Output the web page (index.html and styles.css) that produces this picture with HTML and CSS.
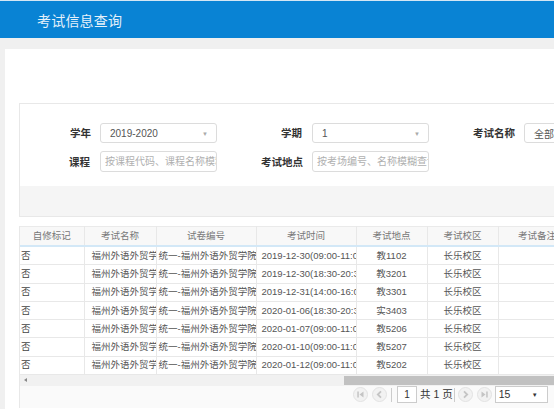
FILE: index.html
```html
<!DOCTYPE html>
<html lang="zh-CN">
<head>
    <meta charset="UTF-8">
    <title>考试信息查询</title>
    <link rel="stylesheet" href="styles.css">
</head>
<body>
    <div class="topbar"><span class="title">考试信息查询</span></div>

    <div class="main">
        <div class="panel">
            <div class="query-box">
                <div class="query-grid">
                    <label>学年</label>
                    <div class="select">2019-2020<span class="caret">▼</span></div>
                    <label>学期</label>
                    <div class="select">1<span class="caret">▼</span></div>
                    <label>考试名称</label>
                    <div class="select">全部<span class="caret">▼</span></div>

                    <label>课程</label>
                    <input type="text" placeholder="按课程代码、课程名称模糊查询">
                    <label>考试地点</label>
                    <input type="text" placeholder="按考场编号、名称模糊查询">
                </div>
                <div class="btn-bar"></div>
            </div>

            <div class="grid-wrap">
                <table class="grid">
                    <colgroup>
                        <col style="width:64px"><col style="width:72px"><col style="width:100px"><col style="width:100px">
                        <col style="width:71px"><col style="width:71px"><col style="width:78px"><col style="width:90px">
                    </colgroup>
                    <thead>
                        <tr><th>自修标记</th><th>考试名称</th><th>试卷编号</th><th>考试时间</th><th>考试地点</th><th>考试校区</th><th>考试备注</th><th></th></tr>
                    </thead>
                    <tbody>
                        <tr><td class="flag">否</td><td class="name">福州外语外贸学院</td><td class="paper">统一-福州外语外贸学院</td><td class="time">2019-12-30(09:00-11:00)</td><td class="c">教1102</td><td class="c">长乐校区</td><td></td><td></td></tr>
                        <tr><td class="flag">否</td><td class="name">福州外语外贸学院</td><td class="paper">统一-福州外语外贸学院</td><td class="time">2019-12-30(18:30-20:30)</td><td class="c">教3201</td><td class="c">长乐校区</td><td></td><td></td></tr>
                        <tr><td class="flag">否</td><td class="name">福州外语外贸学院</td><td class="paper">统一-福州外语外贸学院</td><td class="time">2019-12-31(14:00-16:00)</td><td class="c">教3301</td><td class="c">长乐校区</td><td></td><td></td></tr>
                        <tr><td class="flag">否</td><td class="name">福州外语外贸学院</td><td class="paper">统一-福州外语外贸学院</td><td class="time">2020-01-06(18:30-20:30)</td><td class="c">实3403</td><td class="c">长乐校区</td><td></td><td></td></tr>
                        <tr><td class="flag">否</td><td class="name">福州外语外贸学院</td><td class="paper">统一-福州外语外贸学院</td><td class="time">2020-01-07(09:00-11:00)</td><td class="c">教5206</td><td class="c">长乐校区</td><td></td><td></td></tr>
                        <tr><td class="flag">否</td><td class="name">福州外语外贸学院</td><td class="paper">统一-福州外语外贸学院</td><td class="time">2020-01-10(09:00-11:00)</td><td class="c">教5207</td><td class="c">长乐校区</td><td></td><td></td></tr>
                        <tr><td class="flag">否</td><td class="name">福州外语外贸学院</td><td class="paper">统一-福州外语外贸学院</td><td class="time">2020-01-12(09:00-11:00)</td><td class="c">教5202</td><td class="c">长乐校区</td><td></td><td></td></tr>
                    </tbody>
                </table>

                <div class="hscroll">
                    <span class="arrow"></span>
                    <div class="thumb"></div>
                </div>

                <div class="pager">
                    <svg class="pg-btn" width="15" height="15" viewBox="0 0 15 15"><circle cx="7.5" cy="7.5" r="7" fill="#f2f2f2" stroke="#e2e2e2"/><rect x="4.3" y="4.5" width="1.5" height="6" fill="#c4c4c4"/><path d="M10.5 4.5 L6.5 7.5 L10.5 10.5 Z" fill="#c4c4c4"/></svg>
                    <svg class="pg-btn" width="15" height="15" viewBox="0 0 15 15"><circle cx="7.5" cy="7.5" r="7" fill="#f2f2f2" stroke="#e2e2e2"/><path d="M9 4.3 L5.8 7.5 L9 10.7" fill="none" stroke="#c4c4c4" stroke-width="1.8"/></svg>
                    <span class="sep"></span>
                    <span class="page-input">1</span>
                    <span class="page-text">共 1 页</span>
                    <span class="sep sep-r"></span>
                    <svg class="pg-btn" width="15" height="15" viewBox="0 0 15 15"><circle cx="7.5" cy="7.5" r="7" fill="#f2f2f2" stroke="#e2e2e2"/><path d="M6 4.3 L9.2 7.5 L6 10.7" fill="none" stroke="#c4c4c4" stroke-width="1.8"/></svg>
                    <svg class="pg-btn" width="15" height="15" viewBox="0 0 15 15"><circle cx="7.5" cy="7.5" r="7" fill="#f2f2f2" stroke="#e2e2e2"/><path d="M4.5 4.5 L8.5 7.5 L4.5 10.5 Z" fill="#c4c4c4"/><rect x="9.2" y="4.5" width="1.5" height="6" fill="#c4c4c4"/></svg>
                    <div class="page-size">15<span class="caret dark">▼</span></div>
                </div>
            </div>
        </div>
    </div>
</body>
</html>
```

FILE: styles.css
```css
body { margin: 0; background: #f0f0f0; font-family: "Liberation Sans", "Noto Sans CJK SC", sans-serif; overflow: hidden; width: 554px; height: 409px; }

.topbar { height: 37px; background: #0983d4; border-top: 1px solid #d4e6f4; display: flex; align-items: center; }
.title { margin-left: 37px; font-size: 14px; color: #e6f1fa; letter-spacing: 0.2px; }

.main { padding: 11px 0 0 5px; }
.panel { background: #fff; width: 800px; height: 400px; padding: 54px 0 0 14px; box-sizing: border-box; }

.query-box { border: 1px solid #e8e8e8; border-right: none; padding-top: 19px; }
.query-grid { display: grid; grid-template-columns: 80px 117px 95px 117px 95px 117px; grid-template-rows: 20px 21px; row-gap: 8px; align-items: center; }
.query-grid label { text-align: right; font-size: 10.5px; font-weight: bold; color: #333; line-height: 14px; }
.query-grid label:nth-of-type(odd) { padding-right: 9px; }
.query-grid label:nth-of-type(even) { padding-right: 10px; }
.select, .query-grid input { height: 100%; box-sizing: border-box; border: 1px solid #dcdcdc; border-radius: 3px; background: #fff; }
.select { position: relative; display: flex; align-items: center; padding-left: 9px; font-size: 10px; color: #555; }
.caret { position: absolute; right: 8px; top: 7px; font-size: 6px; line-height: 1; color: #aaa; }
.caret.dark { color: #333; right: 9px; top: 5px; }
.query-grid input { padding: 0 0 0 4px; font-family: inherit; font-size: 10px; color: #555; outline: none; }
.query-grid input::placeholder { color: #b0b0b0; }

.btn-bar { height: 30px; margin-top: 14px; background: #f5f5f5; }

.grid-wrap { margin-top: 9px; border-left: 1px solid #e8e8e8; }
.grid { border-collapse: collapse; table-layout: fixed; width: 646px; font-size: 9.5px; }
.grid th, .grid td { padding: 0; white-space: nowrap; overflow: hidden; text-overflow: clip; border: 1px solid #e8e8e8; line-height: 12px; }
.grid th { height: 18px; background: #f8f8f8; color: #777; font-weight: normal; border-top: 1px solid #eaeaea; border-bottom: 2px solid #d3e8f7; }
.grid td { height: 17.3px; color: #555; }
.grid td.flag { padding-left: 1px; color: #444; border-left: none; }
.grid th:first-child { border-left: none; }
.grid td.name { padding-left: 7px; }
.grid td.paper { padding-left: 2px; padding-right: 3px; }
.grid td.time { padding-left: 5px; }
.grid td.c { text-align: center; }

.hscroll { position: relative; height: 11px; background: #f1f1f1; }
.hscroll .arrow { position: absolute; left: 4px; top: 3px; border-style: solid; border-width: 2px 3px 2px 0; border-color: transparent #888 transparent transparent; }
.hscroll .thumb { position: absolute; left: 324px; right: 0; top: 1px; bottom: 1px; background: #c1c1c1; }

.pager { height: 22px; background: #fafafa; display: flex; align-items: flex-start; padding: 0 0 0 333px; box-sizing: border-box; font-size: 10.5px; line-height: 17px; color: #333; }
.pg-btn { margin: 1px 4px 0 0; flex: none; }
.sep { width: 1px; height: 14px; background: #ccc; margin: 2px 5px 0 0; }
.sep-r { margin: 2px 3px 0 0; }
.page-input { width: 20px; height: 17px; box-sizing: border-box; border: 1px solid #ccc; background: #fff; text-align: center; line-height: 15px; font-size: 10px; margin-right: 3px; }
.page-text { margin-right: 1px; white-space: nowrap; }
.page-size { position: relative; flex: none; width: 53px; height: 17px; box-sizing: border-box; border: 1px solid #ccc; background: #fff; padding-left: 3px; line-height: 15px; font-size: 10.5px; margin-left: -1px; }
```
